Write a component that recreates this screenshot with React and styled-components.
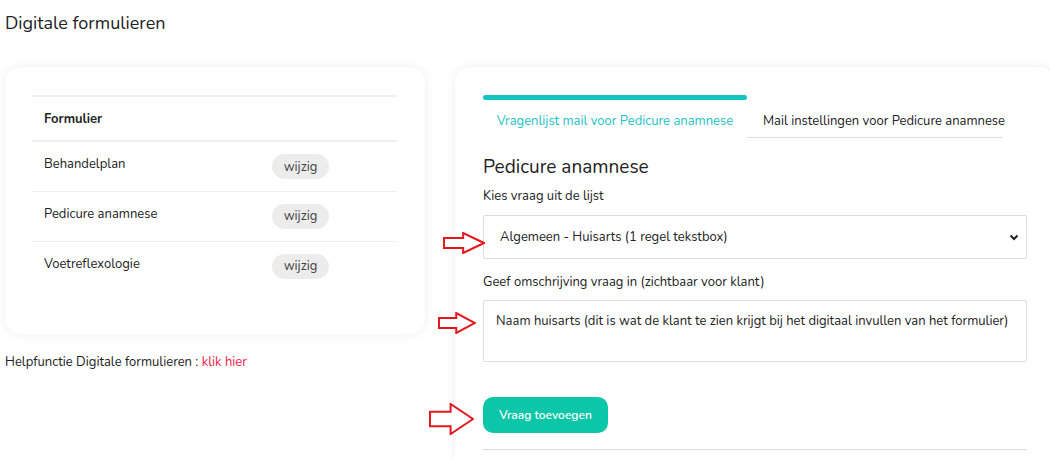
import React from "react";
import styled, { createGlobalStyle } from "styled-components";

const GlobalStyle = createGlobalStyle`
	html, body {
		margin: 0;
		padding: 0;
		background: #ffffff;
		overflow: hidden;
	}
	body {
		font-family: "Nunito", Lato, "Noto Sans", sans-serif;
		color: #222;
		font-size: 13px;
	}
	* {
		box-sizing: border-box;
	}
`;

const Page = styled.div`
	width: 1050px;
	height: 460px;
	padding: 10px 0 0 5px;
	overflow: hidden;
`;

const Title = styled.h1`
	margin: 0;
	font-size: 18px;
	font-weight: 400;
	line-height: 26px;
	color: #222;
`;

const Columns = styled.div`
	display: flex;
	gap: 30px;
	margin-top: 31px;
	align-items: flex-start;
`;

const LeftCol = styled.div`
	width: 420px;
	flex-shrink: 0;
`;

const Card = styled.div`
	background: #fff;
	border-radius: 16px;
	box-shadow: 0 0 12px rgba(0, 0, 0, 0.07);
	padding: ${(p) => p.$pad || "28px"};
`;

const RightCard = styled(Card)`
	width: 600px;
	height: 393px;
	flex-shrink: 0;
	border-bottom-left-radius: 0;
	border-bottom-right-radius: 0;
`;

const Table = styled.table`
	width: 100%;
	border-collapse: collapse;
	table-layout: fixed;
`;

const Row = styled.tr`
	border-top: ${(p) => (p.$thick ? "2px solid #f0f0f0" : "1px solid #eeeeee")};
`;

const HeadCell = styled.th`
	text-align: left;
	font-weight: 700;
	font-size: 13px;
	height: 45px;
	padding: 0 12px;
	color: #222;
`;

const Cell = styled.td`
	vertical-align: top;
	height: 50px;
	padding: 12px 12px 0;
	line-height: 20px;
`;

const EditBtn = styled.button`
	border: none;
	background: #ececec;
	color: #444;
	font-family: inherit;
	font-size: 13px;
	height: 25px;
	width: 57px;
	border-radius: 13px;
	cursor: pointer;
`;

const Help = styled.p`
	margin: 18px 0 0;
	line-height: 20px;
	font-size: 13px;
`;

const HelpLink = styled.a`
	color: #f0194a;
	text-decoration: none;
`;

const Tabs = styled.div`
	display: flex;
	width: 520px;
`;

const Tab = styled.div`
	width: ${(p) => p.$w}px;
	height: 43px;
	padding: ${(p) => (p.$active ? "0" : "5px 0 0 16px")};
	text-align: ${(p) => (p.$active ? "center" : "left")};
	font-size: 13px;
	color: ${(p) => (p.$active ? "#1cc2c6" : "#222")};
	border-bottom: ${(p) => (p.$active ? "none" : "1px solid #dedede")};
	white-space: nowrap;
`;

const TabBar = styled.div`
	height: 5px;
	background: #13c4c3;
	border-radius: 3px;
`;

const TabLabel = styled.div`
	line-height: 37px;
	height: 37px;
	padding-top: 3px;
`;

const Heading = styled.h2`
	margin: 15px 0 0;
	font-size: 19px;
	font-weight: 400;
	line-height: 28px;
	color: #222;
`;

const Label = styled.div`
	font-size: 13px;
	line-height: 20px;
	margin-top: ${(p) => p.$top || 0}px;
`;

const Field = styled.div`
	position: relative;
	margin-top: ${(p) => p.$top || 0}px;
	width: 544px;
`;

const SelectBox = styled.div`
	height: 44px;
	border: 1px solid #dcdcdc;
	border-radius: 2px;
	display: flex;
	align-items: center;
	justify-content: space-between;
	padding: 0 6px 0 16px;
	font-size: 13px;
`;

const TextArea = styled.textarea`
	display: block;
	width: 100%;
	height: 62px;
	border: 1px solid #dcdcdc;
	border-radius: 2px;
	padding: 10px 12px;
	font-family: inherit;
	font-size: 13px;
	line-height: 20px;
	color: #222;
	resize: none;
	outline: none;
`;

const PrimaryBtn = styled.button`
	display: block;
	border: none;
	background: #0bc6a7;
	color: #fff;
	font-family: inherit;
	font-weight: 600;
	font-size: 12px;
	height: 36px;
	width: 125px;
	border-radius: 10px;
	cursor: pointer;
`;

const Divider = styled.div`
	height: 1px;
	width: 544px;
	background: #dadada;
	margin-top: 16px;
`;

const Arrow = styled.svg`
	position: absolute;
	left: ${(p) => p.$left}px;
	top: ${(p) => p.$top}px;
`;

const Chevron = () => (
	<svg width="12" height="12" viewBox="0 0 12 12">
		<path d="M2.5 4.5 L6 8 L9.5 4.5" fill="none" stroke="#222" strokeWidth="2" />
	</svg>
);

const RedArrow = ({ left, top, w, h }) => (
	<Arrow $left={left} $top={top} width={w} height={h} viewBox={`0 0 ${w} ${h}`}>
		<path
			d={`M1 ${h * 0.27} L${w * 0.48} ${h * 0.27} L${w * 0.48} 1 L${w - 1} ${h / 2} L${w * 0.48} ${h - 1} L${w * 0.48} ${h * 0.73} L1 ${h * 0.73} Z`}
			fill="#fff"
			stroke="#e3191f"
			strokeWidth="2"
		/>
	</Arrow>
);

const forms = ["Behandelplan", "Pedicure anamnese", "Voetreflexologie"];

const App = () => {
	return (
		<>
			<GlobalStyle />
			<Page>
				<Title>Digitale formulieren</Title>
				<Columns>
					<LeftCol>
						<Card $pad="28px 28px 43px 27px">
							<Table>
								<colgroup>
									<col style={{ width: 228 }} />
									<col />
								</colgroup>
								<tbody>
									<Row $thick>
										<HeadCell colSpan={2}>Formulier</HeadCell>
									</Row>
									{forms.map((f, i) => (
										<Row key={f} $thick={i === 0}>
											<Cell>{f}</Cell>
											<Cell>
												<EditBtn>wijzig</EditBtn>
											</Cell>
										</Row>
									))}
								</tbody>
							</Table>
						</Card>
						<Help>
							Helpfunctie Digitale formulieren : <HelpLink href="#">klik hier</HelpLink>
						</Help>
					</LeftCol>

					<RightCard>
						<Tabs>
							<Tab $active $w={264}>
								<TabBar />
								<TabLabel>Vragenlijst mail voor Pedicure anamnese</TabLabel>
							</Tab>
							<Tab $w={256}>
								<TabLabel>Mail instellingen voor Pedicure anamnese</TabLabel>
							</Tab>
						</Tabs>

						<Heading>Pedicure anamnese</Heading>
						<Label $top={5}>Kies vraag uit de lijst</Label>
						<Field $top={9}>
							<RedArrow left={-40} top={17} w={42} h={22} />
							<SelectBox>
								<span>Algemeen - Huisarts (1 regel tekstbox)</span>
								<Chevron />
							</SelectBox>
						</Field>

						<Label $top={13}>Geef omschrijving vraag in (zichtbaar voor klant)</Label>
						<Field $top={8}>
							<RedArrow left={-45} top={12} w={38} h={22} />
							<TextArea defaultValue="Naam huisarts (dit is wat de klant te zien krijgt bij het digitaal invullen van het formulier)" />
						</Field>

						<Field $top={35}>
							<RedArrow left={-54} top={6} w={45} h={32} />
							<PrimaryBtn>Vraag toevoegen</PrimaryBtn>
						</Field>
						<Divider />
					</RightCard>
				</Columns>
			</Page>
		</>
	);
};

export default App;
